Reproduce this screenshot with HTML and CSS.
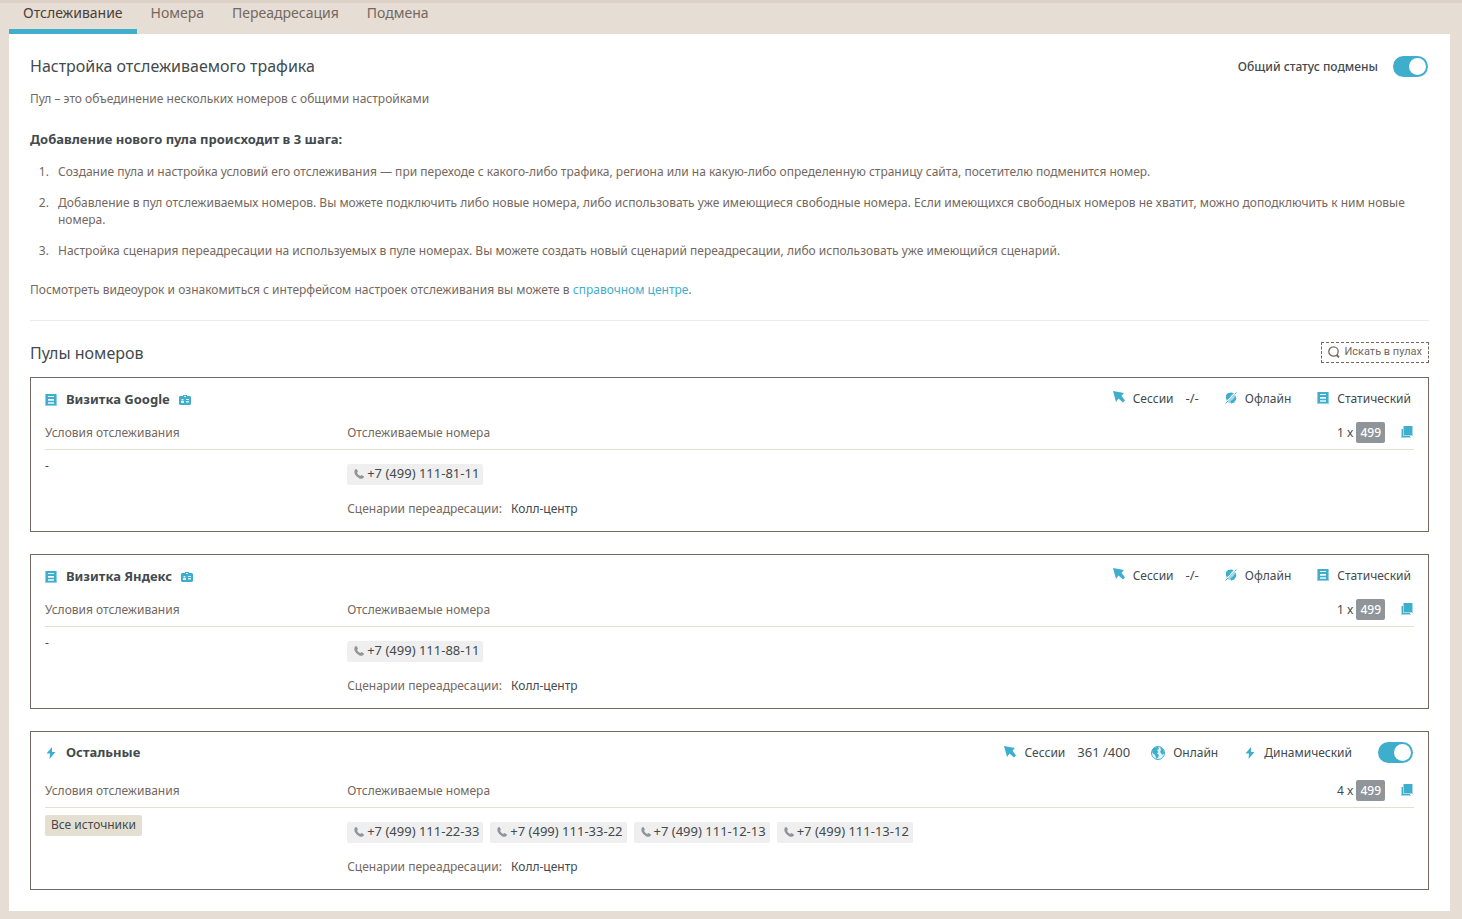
FILE: index.html
```html
<!DOCTYPE html>
<html lang="ru">
<head>
<meta charset="utf-8">
<title>Отслеживание</title>
<link rel="stylesheet" href="styles.css">
</head>
<body>
<svg class="sprite" aria-hidden="true">
  <symbol id="i-static" viewBox="0 0 12 12"><path fill="#8fd0e2" d="M0 0h12v12H0z"/><path fill="#3faecd" d="M1 0h10v11H1z"/><path fill="#e4f4f9" d="M3 2h6v1H3z"/><path fill="#fff" d="M3 5h6v1H3z"/><path fill="#c2e6f0" d="M3 6h6v1H3zM3 8h6v2H3z"/></symbol>
  <symbol id="i-card" viewBox="0 0 12 12"><path fill="#3faecd" d="M1 2h3V1h4v1h3l1 1v7l-1 1H1l-1-1V3z"/><path fill="#d9f0f6" d="M5 2h2v1H5zM2.500 5h2v1.500h-2zM2 7h3v2H2zM7 5h3v1H7zM7 7h3v1.500H7z"/></symbol>
  <symbol id="i-bolt" viewBox="0 0 12 14"><path fill="#3faecd" d="M7 1 1.500 7.500h3.500L4.500 13 10.500 6H7z"/></symbol>
  <symbol id="i-cursor" viewBox="0 0 12 12"><path fill="#3faecd" d="M0 0 11 2 8.500 4.800 12 9.500 10 11.500 5.500 7.500 3 11z"/></symbol>
  <symbol id="i-online" viewBox="0 0 14 14"><circle cx="7" cy="7" r="6.500" fill="#e4f4f9" stroke="#3faecd"/><path fill="#3faecd" d="M1 4 3 1.500 7 1l1 2-2 1 1.500 2L6 7.500l2 1.500-1 2.500-1.500 1.500L4 9 1.500 7zM9 1l3 2 1.500 4-2.500 2-1-2-1-1 1-2z"/></symbol>
  <symbol id="i-offline" viewBox="0 0 12 12"><circle cx="6" cy="6" r="5.300" fill="#a5dbe9"/><path fill="#3faecd" d="M1 3 3 1l4-.5 1.500 1L6 3.500 4.500 6 2.500 8 1 6.500zM10.500 4l.8 3L9 10.500l-3 1L5.500 9 8 7.500z"/><path stroke="#fff" d="m2 9 7.500-7.500"/><path stroke="#3faecd" d="M.5 11.500 3 9M10 2 11.500.5"/></symbol>
  <symbol id="i-copy" viewBox="0 0 12 12"><path fill="#3faecd" d="M3 0h8v9H3zM1 3h1v7h7v1H1z"/><path fill="#a5d9e8" d="M0 3h1v8h9v1H0zM2 0h1v9h9v1H2zM11 0h1v9h-1z"/></symbol>
  <symbol id="i-phone" viewBox="0 0 10 10"><path fill="#8f9598" d="M1 .5 2.500 0 4 2.500 3 3.800Q4 6 6.200 7L7.500 6 10 7.500 9.500 9Q8 10.300 5.500 9.400 2 8 .6 4.500 0 2 1 .5z"/></symbol>
  <symbol id="i-search" viewBox="0 0 12 12"><circle cx="5.500" cy="5.500" r="4.700" fill="none" stroke="#746860" stroke-width="1.300"/><path stroke="#746860" stroke-width="2" d="m8.500 9 2.500 2.300"/></symbol>
</svg>

<nav class="tabs">
  <a class="tab tab-active" href="#tracking">Отслеживание</a>
  <a class="tab" href="#numbers">Номера</a>
  <a class="tab" href="#forwarding">Переадресация</a>
  <a class="tab" href="#swap">Подмена</a>
</nav>

<main class="panel">
  <header class="row intro-head">
    <h1 class="title">Настройка отслеживаемого трафика</h1>
    <label class="status">Общий статус подмены <input class="toggle" type="checkbox" checked></label>
  </header>
  <p class="lead">Пул – это объединение нескольких номеров с общими настройками</p>
  <h2 class="steps-title">Добавление нового пула происходит в 3 шага:</h2>
  <ol class="steps">
    <li>Создание пула и настройка условий его отслеживания — при переходе с какого-либо трафика, региона или на какую-либо определенную страницу сайта, посетителю подменится номер.</li>
    <li>Добавление в пул отслеживаемых номеров. Вы можете подключить либо новые номера, либо использовать уже имеющиеся свободные номера. Если имеющихся свободных номеров не хватит, можно доподключить к ним новые номера.</li>
    <li>Настройка сценария переадресации на используемых в пуле номерах. Вы можете создать новый сценарий переадресации, либо использовать уже имеющийся сценарий.</li>
  </ol>
  <p class="help">Посмотреть видеоурок и ознакомиться с интерфейсом настроек отслеживания вы можете в <a class="link" href="#help">справочном центре</a>.</p>

  <header class="row pools-head">
    <h2 class="title">Пулы номеров</h2>
    <button class="search" type="button"><svg class="ico"><use href="#i-search"/></svg><span class="search-text">Искать в пулах</span></button>
  </header>

  <div class="pools">
    <section class="pool">
      <header class="row pool-head">
        <h3 class="pool-name"><svg class="ico"><use href="#i-static"/></svg>Визитка Google<svg class="ico"><use href="#i-card"/></svg></h3>
        <div class="meta">
          <span class="meta-item"><svg class="ico ico-up"><use href="#i-cursor"/></svg>Сессии<span class="sessions">-/-</span></span>
          <span class="meta-item"><svg class="ico"><use href="#i-offline"/></svg>Офлайн</span>
          <span class="meta-item"><svg class="ico"><use href="#i-static"/></svg>Статический</span>
        </div>
      </header>
      <div class="cols cols-head">
        <span>Условия отслеживания</span><span>Отслеживаемые номера</span>
        <span class="count">1 x <b class="code">499</b><button class="copy" type="button" aria-label="Копировать"><svg class="ico"><use href="#i-copy"/></svg></button></span>
      </div>
      <div class="cols cols-body">
        <div class="cond">-</div>
        <div class="nums">
          <div class="chips"><span class="chip"><svg class="ico-phone"><use href="#i-phone"/></svg>+7 (499) 111-81-11</span></div>
          <p class="scenario">Сценарии переадресации: <span class="value">Колл-центр</span></p>
        </div>
      </div>
    </section>

    <section class="pool">
      <header class="row pool-head">
        <h3 class="pool-name"><svg class="ico"><use href="#i-static"/></svg>Визитка Яндекс<svg class="ico"><use href="#i-card"/></svg></h3>
        <div class="meta">
          <span class="meta-item"><svg class="ico ico-up"><use href="#i-cursor"/></svg>Сессии<span class="sessions">-/-</span></span>
          <span class="meta-item"><svg class="ico"><use href="#i-offline"/></svg>Офлайн</span>
          <span class="meta-item"><svg class="ico"><use href="#i-static"/></svg>Статический</span>
        </div>
      </header>
      <div class="cols cols-head">
        <span>Условия отслеживания</span><span>Отслеживаемые номера</span>
        <span class="count">1 x <b class="code">499</b><button class="copy" type="button" aria-label="Копировать"><svg class="ico"><use href="#i-copy"/></svg></button></span>
      </div>
      <div class="cols cols-body">
        <div class="cond">-</div>
        <div class="nums">
          <div class="chips"><span class="chip"><svg class="ico-phone"><use href="#i-phone"/></svg>+7 (499) 111-88-11</span></div>
          <p class="scenario">Сценарии переадресации: <span class="value">Колл-центр</span></p>
        </div>
      </div>
    </section>

    <section class="pool">
      <header class="row pool-head pool-head-live">
        <h3 class="pool-name"><svg class="ico ico-bolt"><use href="#i-bolt"/></svg>Остальные</h3>
        <div class="meta meta-live">
          <span class="meta-item"><svg class="ico ico-up"><use href="#i-cursor"/></svg>Сессии<span class="sessions">361 /400</span></span>
          <span class="meta-item meta-online"><svg class="ico-globe"><use href="#i-online"/></svg>Онлайн</span>
          <span class="meta-item"><svg class="ico ico-bolt"><use href="#i-bolt"/></svg>Динамический</span>
          <input class="toggle" type="checkbox" checked aria-label="Остальные">
        </div>
      </header>
      <div class="cols cols-head">
        <span>Условия отслеживания</span><span>Отслеживаемые номера</span>
        <span class="count">4 x <b class="code">499</b><button class="copy" type="button" aria-label="Копировать"><svg class="ico"><use href="#i-copy"/></svg></button></span>
      </div>
      <div class="cols cols-body">
        <div class="cond"><span class="tag">Все источники</span></div>
        <div class="nums">
          <div class="chips">
            <span class="chip"><svg class="ico-phone"><use href="#i-phone"/></svg>+7 (499) 111-22-33</span>
            <span class="chip"><svg class="ico-phone"><use href="#i-phone"/></svg>+7 (499) 111-33-22</span>
            <span class="chip"><svg class="ico-phone"><use href="#i-phone"/></svg>+7 (499) 111-12-13</span>
            <span class="chip"><svg class="ico-phone"><use href="#i-phone"/></svg>+7 (499) 111-13-12</span>
          </div>
          <p class="scenario">Сценарии переадресации: <span class="value">Колл-центр</span></p>
        </div>
      </div>
    </section>
  </div>
</main>
</body>
</html>
```

FILE: styles.css
```css
* { box-sizing: border-box; margin: 0; }
body {
  padding: 0 12px 8px 9px;
  border-top: 3px solid #dbd1c6;
  background: #e6ddd4;
  color: #746860;
  font: 12px/17px "Noto Sans", "Open Sans", sans-serif;
}
.sprite { position: absolute; width: 0; height: 0; }
.ico { width: 12px; height: 12px; flex: none; }
.ico-bolt { height: 14px; }
.ico-phone { width: 10px; height: 10px; flex: none; }
.ico-globe { width: 14px; height: 14px; flex: none; }
.ico-up { margin-bottom: 2px; }
.row { display: flex; justify-content: space-between; align-items: center; }

.tabs { display: flex; }
.tab {
  height: 31px;
  padding: 0 14px;
  border-bottom: 5px solid transparent;
  color: #746860;
  font-size: 14px;
  line-height: 20px;
  text-decoration: none;
}
.tab-active { border-color: #3faecd; color: #4a3f38; }

.panel { padding: 20px 21px 21px; background: #fff; }
.title { color: #434a4d; font-size: 16px; font-weight: 400; line-height: 24px; }
.status { display: flex; align-items: center; gap: 15px; margin-right: 1px; color: #434a4d; font-weight: 500; }
.toggle {
  appearance: none;
  display: flex;
  justify-content: flex-end;
  width: 35px;
  height: 21px;
  margin: 0;
  padding: 2px;
  border-radius: 11px;
  background: #3faecd;
}
.toggle::before { content: ""; width: 17px; height: 17px; border-radius: 50%; background: #fff; }
.toggle:not(:checked) { justify-content: flex-start; background: #b8b8b8; }

.lead { margin-top: 12px; }
.steps-title { margin-top: 24px; color: #434a4d; font-size: 13px; line-height: 17px; }
.steps { margin-top: 15px; padding-left: 22px; }
.steps li { margin-bottom: 14px; padding-left: 6px; }
.help { margin-top: 22px; padding-bottom: 22px; border-bottom: 1px solid #ebebeb; }
.link { color: #3faecd; text-decoration: none; }

.pools-head { padding: 20px 0 12px; }
.search {
  display: flex;
  align-items: center;
  gap: 4px;
  height: 21px;
  margin-bottom: 2px;
  padding: 0 6px;
  border: 1px dashed #746860;
  background: #fff;
  color: #746860;
  font: 11px/15px Roboto, sans-serif;
}
.search-text { padding-bottom: 2px; }

.pools { display: grid; gap: 22px; }
.pool { padding: 0 14px 14px; border: 1px solid #746860; }
.pool-head { height: 43px; }
.pool-head-live { height: 41px; margin-bottom: 6px; }
.pool-name { display: flex; align-items: center; gap: 9px; color: #434a4d; font-size: 13px; }
.meta { display: flex; align-items: center; gap: 26px; padding: 0 3px 3px 0; color: #434a4d; }
.meta-live { padding: 0 1px 0 0; }
.meta-item { display: flex; align-items: center; gap: 8px; }
.meta-online { margin-left: -5px; }
.sessions { margin-left: 4px; font-size: 13px; }
.cols { display: grid; grid-template-columns: 22% 1fr auto; column-gap: 1px; }
.cols-head { align-items: center; height: 29px; padding-bottom: 6px; border-bottom: 1px solid #e5dfd2; }
.count { display: flex; align-items: center; gap: 3px; padding-right: 1px; color: #434a4d; }
.code { padding: 2px 4px; border-radius: 2px; background: #8f9598; color: #fff; font-weight: 500; }
.copy { display: flex; margin-left: 13px; padding: 0; border: 0; background: none; }
.cond { padding-top: 7px; color: #434a4d; }
.tag { display: inline-block; padding: 1px 6px 3px; border-radius: 2px; background: #e5dfd2; }
.nums { padding-top: 14px; }
.chips { display: flex; flex-wrap: wrap; gap: 7px; }
.chip { display: flex; align-items: center; gap: 3px; padding: 1px 4px 3px 7px; border-radius: 2px; background: #efefef; color: #434a4d; font-size: 13px; }
.scenario { margin-top: 15px; }
.value { margin-left: 6px; color: #434a4d; }
```
